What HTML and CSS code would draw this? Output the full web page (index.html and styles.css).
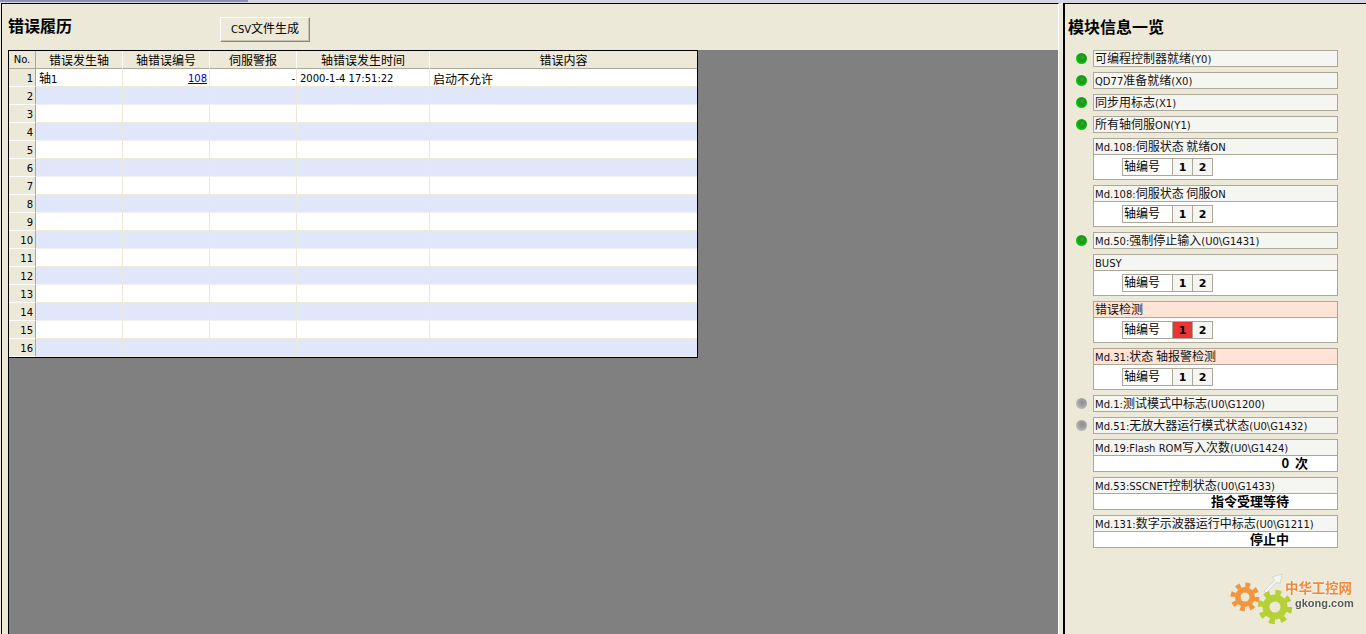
FILE: index.html
```html
<!DOCTYPE html>
<html lang="zh">
<head>
<meta charset="utf-8">
<title>错误履历</title>
<link rel="stylesheet" href="styles.css">
</head>
<body>
<div class="topbar"><div class="topbar-tab"></div></div>
<div class="main">
  <section class="left">
    <header class="left-head">
      <h1 class="title"><span>错误履历</span></h1>
      <button class="csv-btn">CSV<span class="zh">文件生成</span></button>
    </header>
    <div class="work">
      <table class="grid">
        <colgroup><col class="c0"><col class="c1"><col class="c2"><col class="c3"><col class="c4"><col class="c5"></colgroup>
        <thead>
          <tr><th>No.</th><th class="zh">错误发生轴</th><th class="zh">轴错误编号</th><th class="zh">伺服警报</th><th class="zh">轴错误发生时间</th><th class="zh">错误内容</th></tr>
        </thead>
        <tbody>
          <tr><td class="no">1</td><td class="pl"><span class="zh">轴</span>1</td><td class="pr2"><a href="#" class="link">108</a></td><td class="pr1">-</td><td class="pl">2000-1-4 17:51:22</td><td class="pl zh">启动不允许</td></tr>
          <tr><td class="no">2</td><td></td><td></td><td></td><td></td><td></td></tr>
          <tr><td class="no">3</td><td></td><td></td><td></td><td></td><td></td></tr>
          <tr><td class="no">4</td><td></td><td></td><td></td><td></td><td></td></tr>
          <tr><td class="no">5</td><td></td><td></td><td></td><td></td><td></td></tr>
          <tr><td class="no">6</td><td></td><td></td><td></td><td></td><td></td></tr>
          <tr><td class="no">7</td><td></td><td></td><td></td><td></td><td></td></tr>
          <tr><td class="no">8</td><td></td><td></td><td></td><td></td><td></td></tr>
          <tr><td class="no">9</td><td></td><td></td><td></td><td></td><td></td></tr>
          <tr><td class="no">10</td><td></td><td></td><td></td><td></td><td></td></tr>
          <tr><td class="no">11</td><td></td><td></td><td></td><td></td><td></td></tr>
          <tr><td class="no">12</td><td></td><td></td><td></td><td></td><td></td></tr>
          <tr><td class="no">13</td><td></td><td></td><td></td><td></td><td></td></tr>
          <tr><td class="no">14</td><td></td><td></td><td></td><td></td><td></td></tr>
          <tr><td class="no">15</td><td></td><td></td><td></td><td></td><td></td></tr>
          <tr><td class="no">16</td><td></td><td></td><td></td><td></td><td></td></tr>
        </tbody>
      </table>
    </div>
  </section>

  <aside class="right">
    <h2 class="title right-title"><span>模块信息一览</span></h2>
    <div class="list">
      <div class="row"><i class="led on"></i><div class="box"><span class="zh">可编程控制器就绪</span>(Y0)</div></div>
      <div class="row"><i class="led on"></i><div class="box">QD77<span class="zh">准备就绪</span>(X0)</div></div>
      <div class="row"><i class="led on"></i><div class="box"><span class="zh">同步用标志</span>(X1)</div></div>
      <div class="row"><i class="led on"></i><div class="box"><span class="zh">所有轴伺服</span>ON(Y1)</div></div>

      <div class="group">
        <div class="box head">Md.108:<span class="zh">伺服状态 就绪</span>ON</div>
        <div class="axis-body"><div class="axis"><span class="axis-label zh">轴编号</span><span class="axis-cell">1</span><span class="axis-cell">2</span></div></div>
      </div>
      <div class="group">
        <div class="box head">Md.108:<span class="zh">伺服状态 伺服</span>ON</div>
        <div class="axis-body"><div class="axis"><span class="axis-label zh">轴编号</span><span class="axis-cell">1</span><span class="axis-cell">2</span></div></div>
      </div>

      <div class="row"><i class="led on"></i><div class="box">Md.50:<span class="zh">强制停止输入</span>(U0\G1431)</div></div>

      <div class="group">
        <div class="box head">BUSY</div>
        <div class="axis-body"><div class="axis"><span class="axis-label zh">轴编号</span><span class="axis-cell">1</span><span class="axis-cell">2</span></div></div>
      </div>
      <div class="group">
        <div class="box head alert"><span class="zh">错误检测</span></div>
        <div class="axis-body"><div class="axis"><span class="axis-label zh">轴编号</span><span class="axis-cell red">1</span><span class="axis-cell">2</span></div></div>
      </div>
      <div class="group">
        <div class="box head alert">Md.31:<span class="zh">状态 轴报警检测</span></div>
        <div class="axis-body"><div class="axis"><span class="axis-label zh">轴编号</span><span class="axis-cell">1</span><span class="axis-cell">2</span></div></div>
      </div>

      <div class="row"><i class="led off"></i><div class="box">Md.1:<span class="zh">测试模式中标志</span>(U0\G1200)</div></div>
      <div class="row"><i class="led off"></i><div class="box">Md.51:<span class="zh">无放大器运行模式状态</span>(U0\G1432)</div></div>

      <div class="group">
        <div class="box head">Md.19:Flash ROM<span class="zh">写入次数</span>(U0\G1424)</div>
        <div class="value count">0 次</div>
      </div>
      <div class="group">
        <div class="box head">Md.53:SSCNET<span class="zh">控制状态</span>(U0\G1433)</div>
        <div class="value">指令受理等待</div>
      </div>
      <div class="group">
        <div class="box head">Md.131:<span class="zh">数字示波器运行中标志</span>(U0\G1211)</div>
        <div class="value">停止中</div>
      </div>
    </div>

    <svg class="logo" width="141" height="66" viewBox="1225 565 141 66" aria-label="中华工控网 gkong.com">
      <g class="gears">
        <path d="M1264 591 L1275 580 L1272 577 L1282 574 L1280 584 L1277 582 L1266 593 Z" fill="#f4f4f0" stroke="#c9c7bb" stroke-width="0.6"/>
        <circle cx="1245" cy="597" r="10" fill="#f2953c"/>
        <circle cx="1245" cy="597" r="12" fill="none" stroke="#f2953c" stroke-width="5" stroke-dasharray="4.7 4.72"/>
        <circle cx="1245" cy="597" r="4.5" fill="#ece9d8"/>
        <circle cx="1275" cy="607" r="12.5" fill="#b6d136"/>
        <circle cx="1275" cy="607" r="14.5" fill="none" stroke="#b6d136" stroke-width="5.5" stroke-dasharray="5.69 5.69"/>
        <circle cx="1275" cy="607" r="5.5" fill="#ece9d8"/>
      </g>
      <text class="logo-cn" x="1285" y="593">中华工控网</text>
      <text class="logo-en" x="1295" y="607">gkong.com</text>
    </svg>
  </aside>
</div>
</body>
</html>
```
FILE: styles.css
```css
* { box-sizing: border-box; }
html, body { margin: 0; padding: 0; height: 100%; overflow: hidden; }
body {
  background: #ece9d8;
  color: #000;
  font-family: "DejaVu Sans", "Noto Sans CJK SC", sans-serif;
  font-size: 10px;
}
.zh {
  font-family: "Noto Sans CJK SC", "DejaVu Sans", sans-serif;
  font-size: 12px;
}
span.zh { line-height: 12px; }
.topbar { height: 3px; background: #d6d6e4; }
.topbar-tab { width: 248px; height: 2px; background: #8f8fb0; }
.main { display: flex; height: 631px; }

.left {
  width: 1058px;
  margin-left: 1px;
  border-left: 1px solid #000;
  border-top: 1px solid #000;
  border-right: 1px solid #fff;
  display: flex;
  flex-direction: column;
  flex: none;
}
.left-head {
  height: 46px;
  flex: none;
  display: flex;
  align-items: flex-start;
}
.title {
  margin: 0;
  font-family: "Noto Sans CJK SC", sans-serif;
  font-size: 16px;
  font-weight: 700;
  line-height: 24px;
}
.left-head .title { padding: 9px 0 0 6px; width: 218px; }
.csv-btn {
  margin-top: 13px;
  width: 90px;
  height: 25px;
  padding: 0 0 2px;
  background: #ece9d8;
  color: #000;
  font-family: "DejaVu Sans", sans-serif;
  font-size: 10px;
  border: 1px solid;
  border-color: #fff #8a8778 #8a8778 #fff;
  box-shadow: inset -1px -1px 0 #c6c3b2;
}
.work {
  flex: 1;
  margin-left: 6px;
  background: #808080;
  border-left: 1px solid #000;
}
.grid {
  table-layout: fixed;
  width: 689px;
  border-collapse: separate;
  border-spacing: 0;
  border-top: 1px solid #000;
  border-right: 1px solid #000;
  border-bottom: 1px solid #000;
  background: #fff;
}
.c0 { width: 27px; }
.c1, .c2, .c3 { width: 87px; }
.c4 { width: 133px; }
.c5 { width: 267px; }
.grid th {
  height: 18px;
  padding: 0;
  font-weight: 400;
  background: #ece9d8;
  border-right: 1px solid #fff;
  border-bottom: 1px solid #aca899;
  line-height: 16px;
}
.grid th:first-child { border-right-color: #aca899; }
.grid th:last-child, .grid td:last-child { border-right: 0; }
.grid td {
  height: 18px;
  padding: 3px 0 0;
  border-right: 1px solid #ece9d8;
  border-bottom: 1px solid #ece9d8;
  line-height: 13px;
  vertical-align: top;
  white-space: nowrap;
}
.grid tbody tr:nth-child(even) td { background: #e1e7fb; border-bottom-color: #eef0f0; }
.grid tbody td.no,
.grid tbody tr:nth-child(even) td.no {
  background: #ece9d8;
  text-align: right;
  padding-right: 2px;
  border-right: 1px solid #aca899;
  border-bottom: 1px solid #fff;
}
.grid td:last-child { border-bottom-color: #ece9d8; }
.pl { padding-left: 3px !important; }
.pr1 { padding-right: 1px !important; text-align: right; }
.pr2 { padding-right: 2px !important; text-align: right; }
.link { color: #0000c0; text-decoration: underline; }

.right {
  position: relative;
  margin-left: 4px;
  flex: 1;
  border-left: 2px solid #000;
  border-top: 1px solid #000;
}
.right-title { padding: 10px 0 0 3px; height: 46px; }
.list {
  padding-left: 10px;
  width: 273px;
  display: flex;
  flex-direction: column;
  gap: 5px;
}
.row { display: flex; align-items: center; height: 17px; }
.led {
  width: 11px;
  height: 11px;
  border-radius: 50%;
  flex: none;
  margin: 0 6px 0 1px;
}
.led.on { background: radial-gradient(circle at 58% 40%, #3f9f3f 0, #149a14 35%, #10c810 75%, #18d018 100%); }
.led.off { background: radial-gradient(circle at 58% 40%, #8c8c8c 0, #a2a2a2 40%, #c4c4c4 80%, #cfcfcf 100%); }
.box {
  flex: 1;
  height: 17px;
  border: 1px solid #aca899;
  background: #f5f5f2;
  padding: 1px 0 0 1px;
  line-height: 16px;
  white-space: nowrap;
  color: #111;
}
.group { margin-left: 18px; border: 0; }
.head { display: block; }
.alert { background: #ffe4d6; }
.axis-body {
  height: 25px;
  background: #fff;
  border: 1px solid #aca899;
  border-top: 0;
  padding: 3px 0 0 28px;
}
.axis {
  display: flex;
  width: 91px;
  height: 18px;
  border: 1px solid #aca899;
  background: #f5f5f2;
}
.axis-label {
  width: 50px;
  background: #fff;
  padding: 1px 0 0 1px;
  line-height: 18px;
  border-right: 1px solid #aca899;
}
.axis-cell {
  width: 20px;
  font-family: "DejaVu Sans", sans-serif;
  font-weight: 700;
  font-size: 11px;
  line-height: 18px;
  text-align: center;
  border-right: 1px solid #aca899;
}
.axis-cell:last-child { border-right: 0; width: 19px; }
.axis-cell.red { background: #e93535; }
.value {
  height: 16px;
  background: #fff;
  border: 1px solid #aca899;
  border-top: 0;
  text-align: right;
  padding-right: 48px;
  font-family: "Noto Sans CJK SC", sans-serif;
  font-size: 13px;
  font-weight: 700;
  line-height: 14px;
  white-space: nowrap;
}
.value.count { padding-right: 29px; word-spacing: 3px; }

.logo { position: absolute; left: 160px; top: 561px; }
.gears { filter: blur(0.5px); }
.logo-cn {
  font-family: "Noto Sans CJK SC", sans-serif;
  font-size: 13.4px;
  font-weight: 700;
  fill: #f0893a;
  filter: drop-shadow(0 0 1px #fff);
}
.logo-en {
  font-family: "Liberation Sans", sans-serif;
  font-size: 11px;
  font-weight: 700;
  fill: #5a5a55;
  filter: drop-shadow(0 0 1px #fff);
}
```
